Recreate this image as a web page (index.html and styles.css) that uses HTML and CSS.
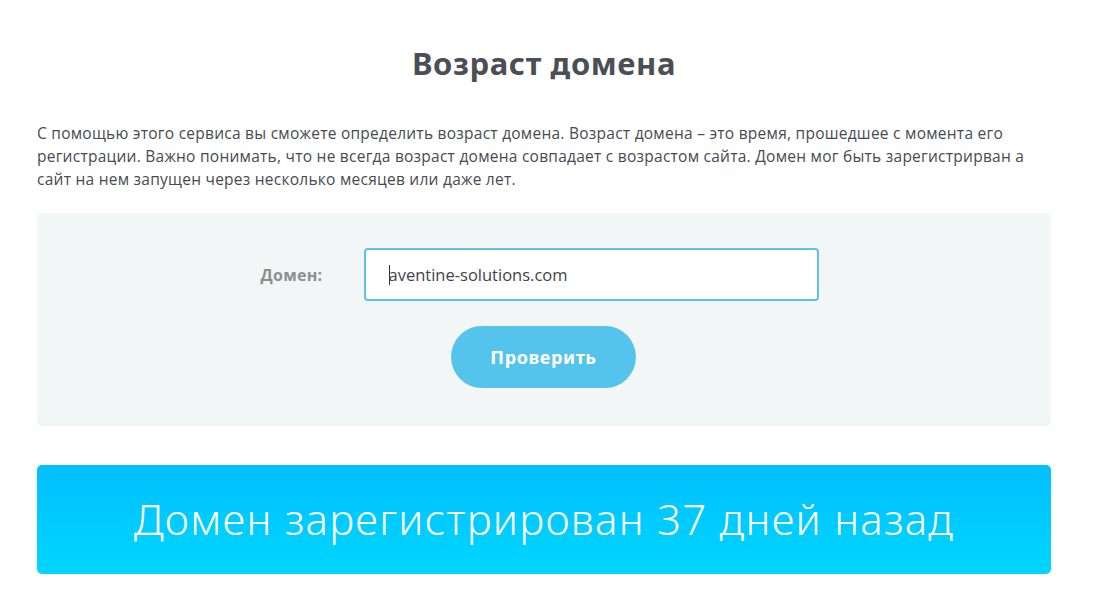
FILE: index.html
```html
<!DOCTYPE html>
<html lang="ru">
<head>
<meta charset="utf-8">
<title>Возраст домена</title>
<link rel="stylesheet" href="styles.css">
</head>
<body>
<main class="page">
  <h1 class="title">Возраст домена</h1>
  <p class="intro">С помощью этого сервиса вы сможете определить возраст домена. Возраст домена – это время, прошедшее с момента его регистрации. Важно понимать, что не всегда возраст домена совпадает с возрастом сайта. Домен мог быть зарегистрирван а сайт на нем запущен через несколько месяцев или даже лет.</p>
  <form class="checker">
    <div class="field">
      <label class="label" for="domain">Домен:</label>
      <div class="input"><span class="caret"></span>aventine-solutions.com</div>
    </div>
    <button class="btn" type="button">Проверить</button>
  </form>
  <div class="result">Домен зарегистрирован 37 дней назад</div>
</main>
</body>
</html>
```
FILE: styles.css
```css
* { box-sizing: border-box; }
html, body { margin: 0; padding: 0; background: #fff; }
body { font-family: "Open Sans", "Noto Sans", sans-serif; color: #4a4f55; }
.page { width: 1014px; margin: 0 0 0 37px; padding-top: 43px; }
.title {
  margin: 0;
  text-align: center;
  font-family: "Noto Sans", "Open Sans", sans-serif;
  font-weight: 700;
  font-size: 31px;
  letter-spacing: 0.6px;
  line-height: 40px;
  color: #4a4f55;
}
.intro {
  margin: 39px 0 0;
  font-size: 15.5px;
  letter-spacing: 0.25px;
  line-height: 23px;
  color: #464b51;
}
.checker {
  margin-top: 22px;
  background: #f3f6f7;
  border-radius: 5px;
  height: 213px;
  padding-top: 35px;
  display: flex;
  flex-direction: column;
  align-items: center;
}
.field { display: flex; align-items: center; margin-left: -1px; }
.label {
  width: 286px;
  text-align: right;
  padding-right: 41px;
  font-size: 16px;
  letter-spacing: 0.3px;
  font-weight: 700;
  color: #8c8f92;
}
.input {
  width: 455px;
  height: 53px;
  border: 2px solid #5bc3ea;
  border-radius: 4px;
  background: #fff;
  display: flex;
  align-items: center;
  padding-left: 23px;
  font-size: 16.5px;
  color: #3f4448;
  margin-right: 191px;
}
.caret { display: inline-block; width: 1px; height: 20px; background: #333; margin-right: -1px; }
.btn {
  margin-top: 25px;
  width: 185px;
  height: 62px;
  border: 0;
  border-radius: 31px;
  background: #55c4ec;
  color: #fff;
  font-family: "Noto Sans", sans-serif;
  font-weight: 700;
  font-size: 18px;
  letter-spacing: 0.6px;
  margin-left: -1px;
}
.result {
  margin-top: 39px;
  height: 109px;
  border-radius: 5px;
  background: linear-gradient(to bottom, #00bffe, #00d6ff);
  color: #fff;
  display: flex;
  align-items: center;
  justify-content: center;
  font-family: "Noto Sans", sans-serif;
  font-weight: 300;
  font-size: 42px;
  letter-spacing: 1.25px;
  padding-bottom: 2px;
}
```
